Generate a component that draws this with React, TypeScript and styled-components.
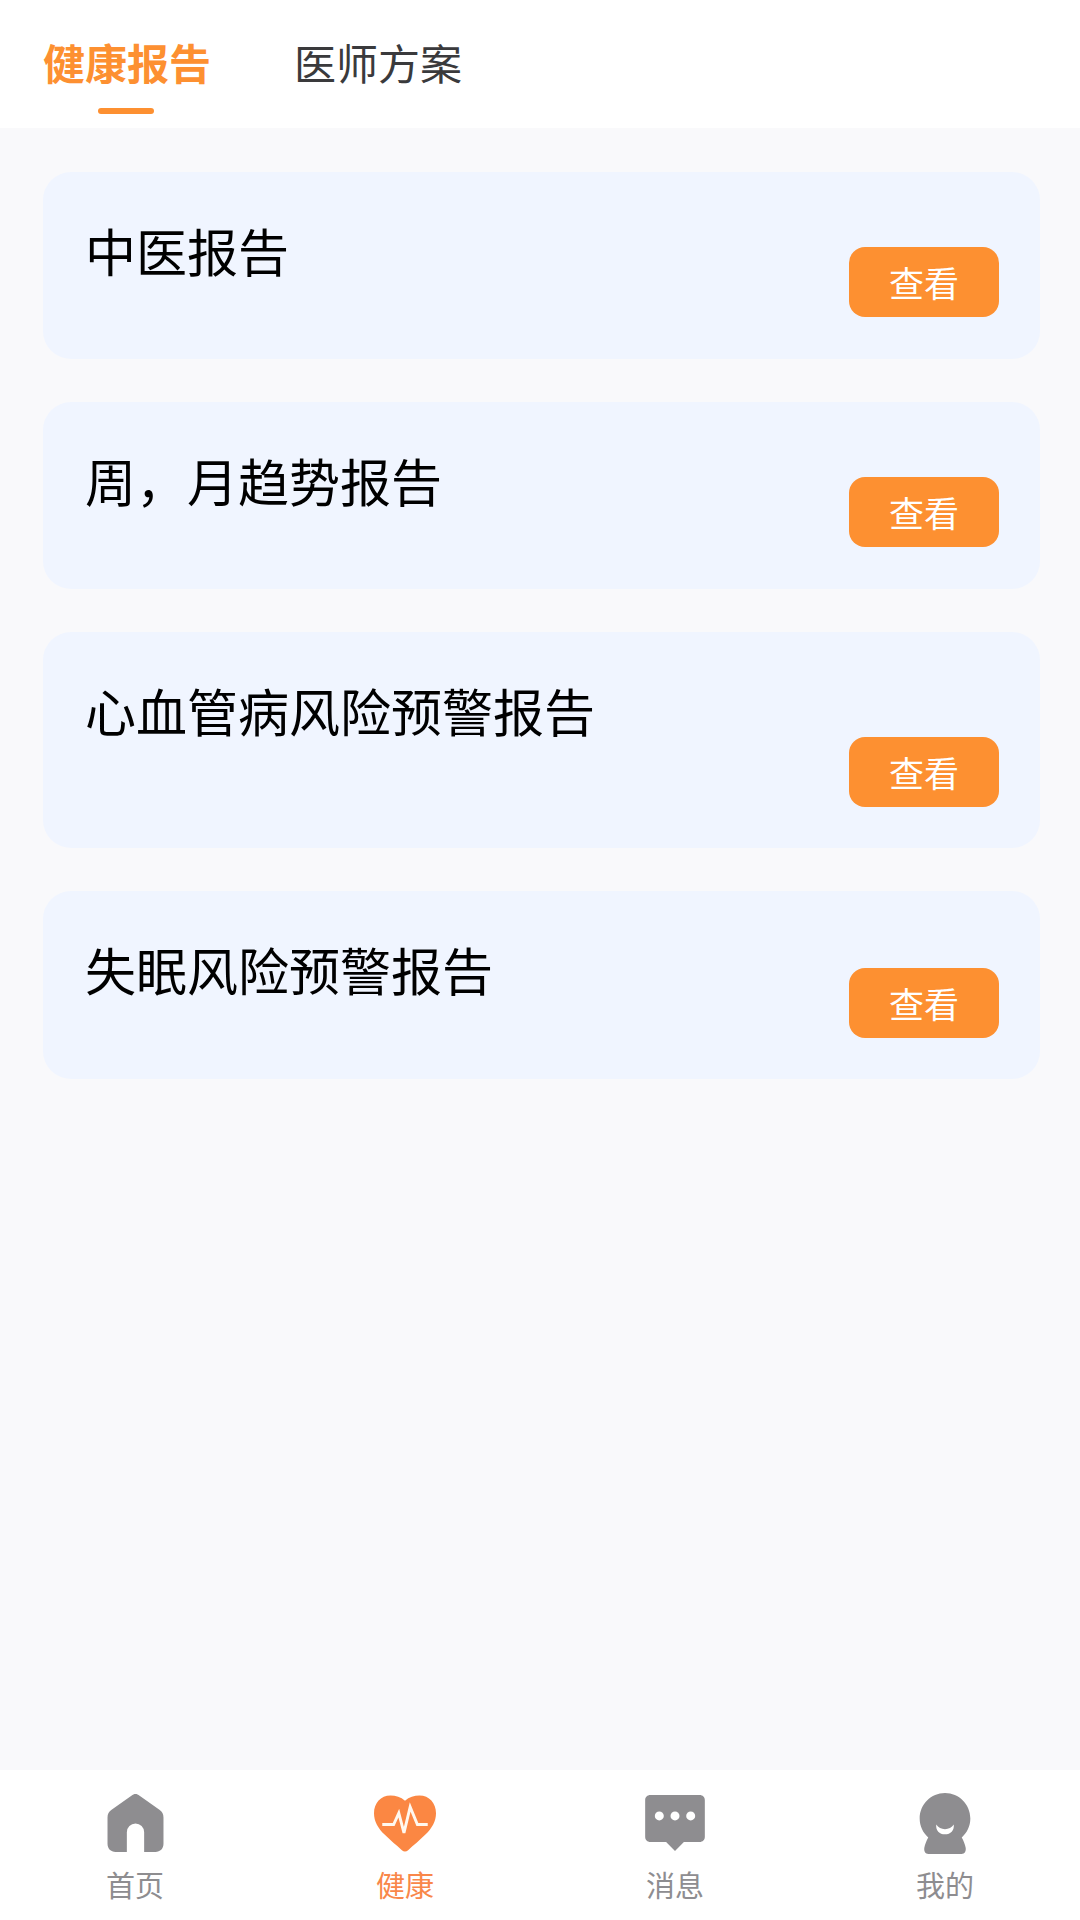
import { createGlobalStyle, styled } from "styled-components"

const GlobalStyle = createGlobalStyle`
  html, body {
    margin: 0;
    padding: 0;
    background: #f9f9fb;
  }
  * {
    box-sizing: border-box;
  }
`

const reports = [
  { name: "中医报告", height: 187, inset: 42 },
  { name: "周，月趋势报告", height: 187, inset: 42 },
  { name: "心血管病风险预警报告", height: 216, inset: 41 },
  { name: "失眠风险预警报告", height: 188, inset: 41 },
]

const HomeIcon = () => (
  <svg width="57" height="58" viewBox="0 0 55 57">
    <path
      d="M24.500 1a5 5 0 0 1 6 0L51 15.500c2.700 2 4 4.200 4 7.500v26c0 4.800-3.200 8-8 8H36V37.500a8.500 8.500 0 0 0-17 0V57H8c-4.800 0-8-3.200-8-8V23c0-3.300 1.300-5.500 4-7.500z"
      fill="#8e8d90"
    />
  </svg>
)

const HeartIcon = () => (
  <svg width="62" height="57" viewBox="0 0 60 54">
    <path
      d="M30 5C26 1.500 21 0 16 0 6.500 0 0 7.500 0 17c0 8 4 14.500 10.500 21 5.500 5.500 11 10 16.500 14.800 1.800 1.600 4.200 1.600 6 0C38.500 48 44 43.500 49.500 38 56 31.500 60 25 60 17 60 7.500 53.500 0 44 0c-5 0-10 1.500-14 5z"
      fill="#fb8743"
    />
    <path
      d="M8 28h11l5-11 5 19 6-25 7 17h10"
      fill="none"
      stroke="#fff8ef"
      strokeWidth="2.800"
    />
  </svg>
)

const MessageIcon = () => (
  <svg width="60" height="56" viewBox="0 0 57 53.500">
    <path
      d="M5 0h47c3 0 5 2 5 5v35c0 3-2 5-5 5H37l-8.500 8.500L20 45H5c-3 0-5-2-5-5V5c0-3 2-5 5-5z"
      fill="#8e8d90"
    />
    <circle cx="13.500" cy="20" r="4.300" fill="#fff" />
    <circle cx="28.500" cy="20" r="4.300" fill="#fff" />
    <circle cx="43.500" cy="20" r="4.300" fill="#fff" />
  </svg>
)

const MineIcon = () => (
  <svg width="52" height="61" viewBox="0 0 49 59">
    <path
      d="M24.500 0C38 0 49 11 49 24.700c0 7.300-3.200 13.800-8.300 18.300 1.800 3.200 3.200 6.800 3.800 10 .5 3.300-1 6-4 6H8.500c-3 0-4.500-2.700-4-6 .6-3.200 2-6.800 3.800-10C3.200 38.500 0 32 0 24.700 0 11 11 0 24.500 0z"
      fill="#8e8d90"
    />
    <path
      d="M16 30.500c-.5 6 3 9.500 8.500 9.500s9-3.500 8.500-9.500c-2 3-5 4.500-8.500 4.500s-6.500-1.500-8.500-4.500z"
      fill="#fff"
    />
  </svg>
)

const navItems = [
  { label: "首页", icon: <HomeIcon />, active: false },
  { label: "健康", icon: <HeartIcon />, active: true },
  { label: "消息", icon: <MessageIcon />, active: false },
  { label: "我的", icon: <MineIcon />, active: false },
]

export default function App() {
  return (
    <Page>
      <GlobalStyle />
      <Tabs>
        <Tab $active>健康报告</Tab>
        <Tab>医师方案</Tab>
      </Tabs>
      <List>
        {reports.map((report) => (
          <Card key={report.name} $height={report.height} $inset={report.inset}>
            <Title>{report.name}</Title>
            <ViewButton>查看</ViewButton>
          </Card>
        ))}
      </List>
      <BottomBar>
        {navItems.map((item) => (
          <NavItem key={item.label} $active={item.active}>
            <NavIcon>{item.icon}</NavIcon>
            {item.label}
          </NavItem>
        ))}
      </BottomBar>
    </Page>
  )
}

const Page = styled.div`
  width: 1080px;
  height: 1920px;
  display: flex;
  flex-direction: column;
  background: #f9f9fb;
  font-family: "Noto Sans CJK SC", "Noto Sans", sans-serif;
`

const Tabs = styled.div`
  height: 128px;
  flex-shrink: 0;
  display: flex;
  gap: 83px;
  padding-left: 43px;
  background: #ffffff;
`

const Tab = styled.div<{ $active?: boolean }>`
  position: relative;
  width: 168px;
  height: 128px;
  line-height: 124px;
  font-size: 42px;
  font-weight: ${(props) => (props.$active ? 700 : 400)};
  color: ${(props) => (props.$active ? "#fd9031" : "#3a3a3c")};

  &::after {
    content: "";
    display: ${(props) => (props.$active ? "block" : "none")};
    position: absolute;
    left: 55px;
    bottom: 14px;
    width: 56px;
    height: 6px;
    border-radius: 3px;
    background: #fd9031;
  }
`

const List = styled.div`
  flex: 1;
  display: flex;
  flex-direction: column;
  gap: 43px;
  padding: 44px 40px 0 43px;
`

const Card = styled.div<{ $height: number; $inset: number }>`
  height: ${(props) => props.$height}px;
  display: flex;
  align-items: flex-end;
  justify-content: space-between;
  padding: 33px 41px ${(props) => props.$inset}px 42px;
  border-radius: 28px;
  background: #f0f5ff;
`

const Title = styled.div`
  align-self: flex-start;
  font-size: 51px;
  line-height: 90px;
  color: #000000;
`

const ViewButton = styled.div`
  width: 150px;
  height: 70px;
  display: flex;
  align-items: center;
  justify-content: center;
  padding-bottom: 2px;
  border-radius: 16px;
  background: #fd9031;
  color: #ffffff;
  font-size: 35px;
`

const BottomBar = styled.div`
  height: 150px;
  flex-shrink: 0;
  display: grid;
  grid-template-columns: repeat(4, 1fr);
  background: #ffffff;
`

const NavItem = styled.div<{ $active?: boolean }>`
  display: flex;
  flex-direction: column;
  align-items: center;
  font-size: 29px;
  line-height: 40px;
  color: ${(props) => (props.$active ? "#f9874a" : "#8e8d90")};
`

const NavIcon = styled.div`
  height: 60px;
  margin: 23px 0 11px;
  display: flex;
  align-items: center;
  justify-content: center;
`
